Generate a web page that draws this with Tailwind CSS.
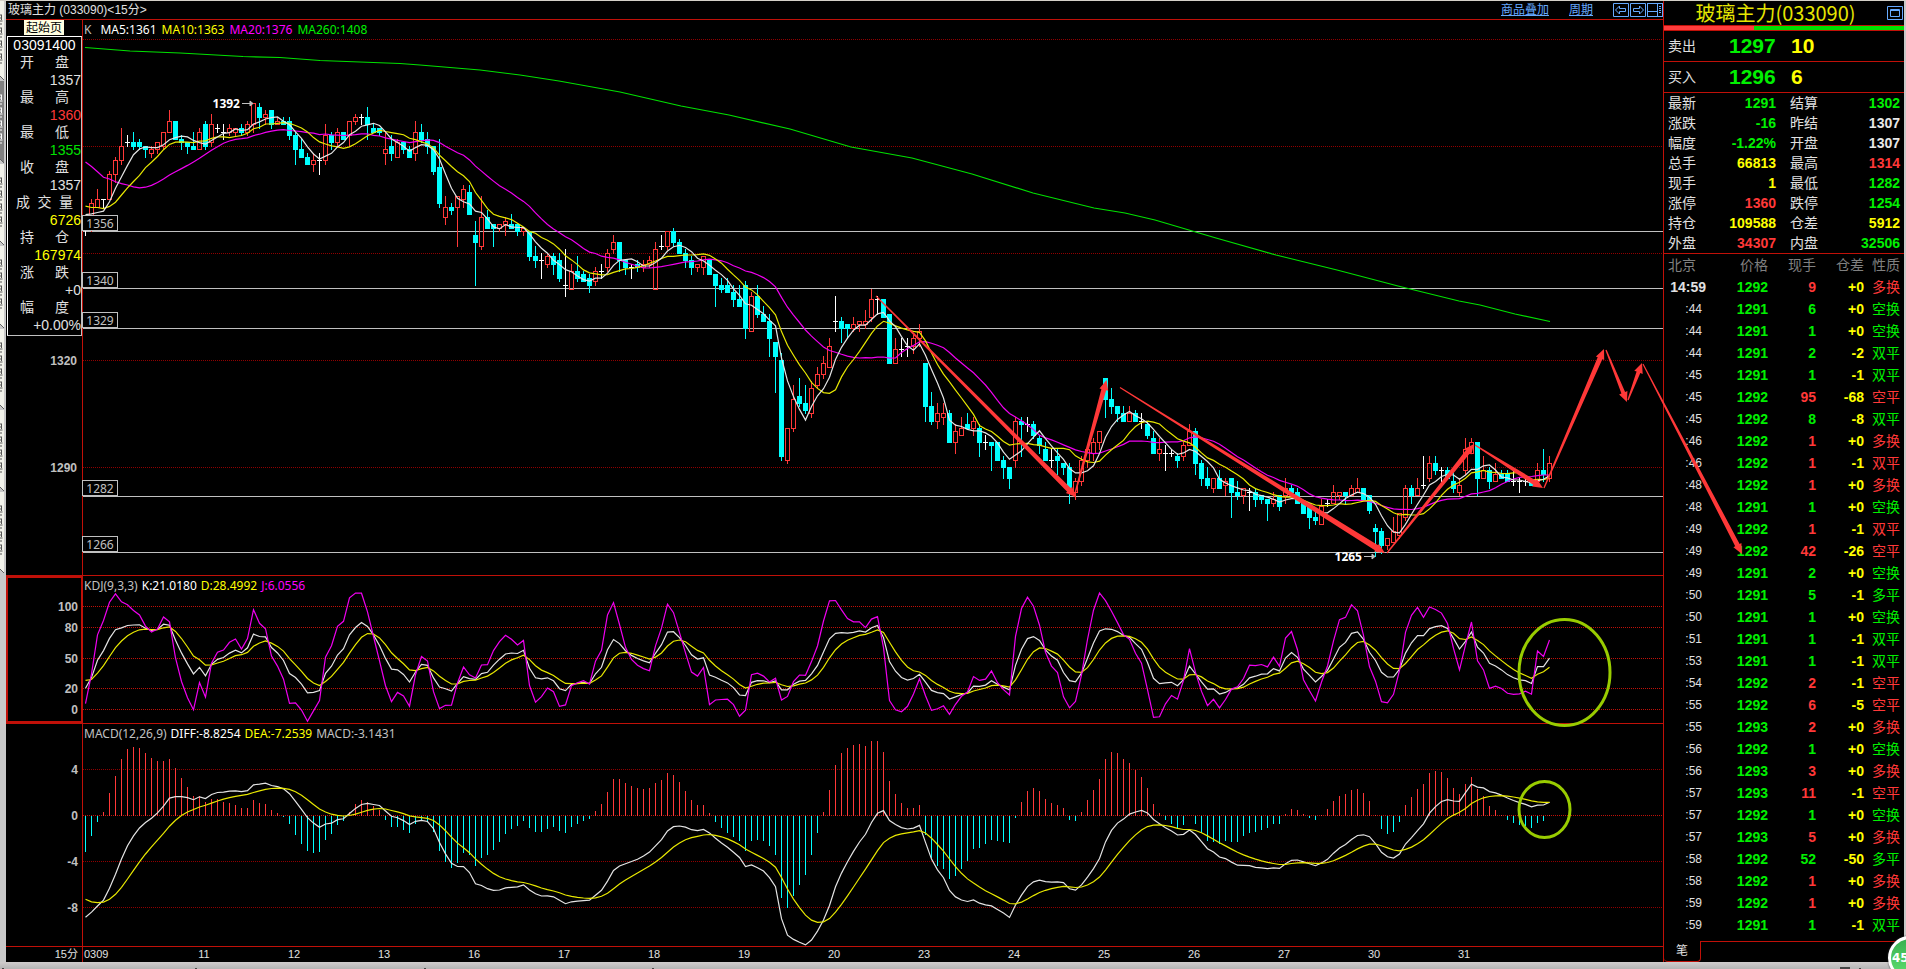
<!DOCTYPE html>
<html lang="zh-CN">
<head>
<meta charset="utf-8">
<meta name="viewport" content="width=device-width, initial-scale=1">
<title>玻璃主力 (033090)</title>
<script src="https://cdn.jsdelivr.net/npm/@tailwindcss/browser@4"></script>
</head>
<body class="relative flex h-screen flex-col overflow-hidden bg-[#d4d0c8] font-['Noto_Sans','Noto_Sans_CJK_SC',sans-serif] text-xs text-[#e0e0e0]">

<div class="flex min-h-0 flex-1 pt-px">
  <!-- side tab strip -->
  <nav class="flex w-[6px] shrink-0 flex-col border-r-2 border-[#c8c8c8] bg-[#c8c8c8]" aria-label="页面标签">
    <svg class="h-full w-full" viewBox="0 1 4 961" preserveAspectRatio="none" id="tabs"></svg>
  </nav>

  <!-- charts -->
  <main class="flex min-w-0 flex-1 flex-col bg-black">
    <header class="flex h-[19px] shrink-0 items-center justify-between border-b border-[#c01008] pl-0.5">
      <h1 class="font-['Liberation_Sans','Noto_Sans_CJK_SC',sans-serif] text-xs leading-[18px]">玻璃主力 (033090)&lt;15分&gt;</h1>
      <div class="flex items-center text-[#66aaff]">
        <a href="#" class="mr-5 leading-4 underline">商品叠加</a>
        <a href="#" class="mr-5 leading-4 underline">周期</a>
        <div class="flex gap-px">
          <button aria-label="左移"><svg width="16" height="14" fill="none" stroke="#66aaff"><path d="M.5.5h15v13H.5zM2.500 7l4-4v2.500h6v3h-6V11z"/></svg></button>
          <button aria-label="右移"><svg width="16" height="14" fill="none" stroke="#66aaff"><path d="M.5.5h15v13H.5zM13.500 7l-4-4v2.500h-6v3h6V11z"/></svg></button>
          <button aria-label="布局"><svg width="16" height="14" fill="none" stroke="#66aaff"><path d="M0 .5h16M0 13.500h16M.5 0v14M15.500 0v14M.5 8.500h10M10.500.5v13"/><path d="M12 3.500h2M12 5.500h2M12 7.500h2M12 9.500h2" /></svg></button>
        </div>
      </div>
    </header>

    <section class="relative min-h-0 flex-[555] border-b border-[#c01008]">
      <svg id="main" class="block h-full w-full" viewBox="6 20 1657 555" preserveAspectRatio="none"></svg>
      <p class="absolute left-[78px] top-0.5 flex gap-[5px] leading-4">
        <span class="mr-1 text-[#c0c0c0]">K</span><span class="text-white">MA5:1361</span><span class="text-[#ffff00]">MA10:1363</span><span class="text-[#ff00ff]">MA20:1376</span><span class="text-[#00f000]">MA260:1408</span>
      </p>
      <a href="#" class="absolute left-[18px] top-0 z-10 h-[15px] bg-[#ffffe1] px-0.5 leading-[15px] text-black">起始页</a>
      <!-- floating candle read-out -->
      <dl id="readout" class="absolute left-px top-4 w-[75px] border border-[#c0c0c0] border-l-white border-t-white bg-black pb-px font-['Liberation_Sans','Noto_Sans_CJK_SC',sans-serif] text-sm leading-[17px]">
        <div class="h-[17px] text-center text-white">03091400</div>
      </dl>
    </section>

    <section class="relative min-h-0 flex-[147] border-b border-[#c01008]">
      <svg id="kdj" class="block h-full w-full" viewBox="6 576 1657 147" preserveAspectRatio="none"></svg>
      <p class="absolute left-[78px] top-0.5 flex gap-1 leading-4"><span class="text-[#c0c0c0]">KDJ(9,3,3)</span><span class="text-white">K:21.0180</span><span class="text-[#ffff00]">D:28.4992</span><span class="text-[#ff00ff]">J:6.0556</span></p>
    </section>

    <section class="relative min-h-0 flex-[222] border-b border-[#c01008]">
      <svg id="macd" class="block h-full w-full" viewBox="6 724 1657 222" preserveAspectRatio="none"></svg>
      <p class="absolute left-[78px] top-0.5 flex gap-1 leading-4"><span class="text-[#c0c0c0]">MACD(12,26,9)</span><span class="text-white">DIFF:-8.8254</span><span class="text-[#ffff00]">DEA:-7.2539</span><span class="text-[#c0c0c0]">MACD:-3.1431</span></p>
    </section>

    <footer class="flex h-[15px] shrink-0 font-['Liberation_Sans','Noto_Sans_CJK_SC',sans-serif] text-[11px] leading-[15px]">
      <span class="w-[76px] shrink-0 pr-1 text-right">15分</span>
      <div id="dates" class="relative flex flex-1 border-l border-[#c01008] pl-[76px]"><span class="absolute left-px">0309</span></div>
    </footer>
  </main>

  <!-- quote panel -->
  <aside class="flex w-[241px] shrink-0 flex-col border-l border-[#c01008] bg-black font-['Liberation_Sans','Noto_Sans_CJK_SC',sans-serif] text-sm">
    <div class="flex h-6 shrink-0 items-center">
      <h2 class="flex-1 text-center font-['Noto_Sans_CJK_SC',sans-serif] text-[20px] leading-6 text-[#e6e600]">玻璃主力(033090)</h2>
      <button aria-label="最大化" class="mr-px"><svg width="16" height="14" fill="none" stroke="#66aaff"><path d="M.5.5h15v13H.5zM3.500 3.500h9v7h-9zM3 4.500h10"/></svg></button>
    </div>
    <div class="flex h-1.5 shrink-0 border-y border-[#c01008]"><i class="h-full flex-[90] bg-[#ff3c3c]"></i><i class="h-full flex-[150] bg-[#00e000]"></i></div>
    <div class="flex h-[31px] shrink-0 items-center border-b border-[#c01008] pl-1"><span class="w-[61px]">卖出</span><b class="w-[62px] text-[21px] text-[#00f000]">1297</b><b class="text-[21px] text-[#ffff00]">10</b></div>
    <div class="flex h-[31px] shrink-0 items-center border-b border-[#c01008] pl-1"><span class="w-[61px]">买入</span><b class="w-[62px] text-[21px] text-[#00f000]">1296</b><b class="text-[21px] text-[#ffff00]">6</b></div>
    <table class="w-full shrink-0 table-fixed border-b border-[#c01008]"><tbody id="quote"></tbody></table>
    <table class="w-full shrink-0 table-fixed">
      <thead><tr class="h-[22px] leading-[22px] text-[#808080]"><th class="w-[42px] pl-1 text-left font-normal">北京</th><th class="w-[62px] text-right font-normal">价格</th><th class="w-12 text-right font-normal">现手</th><th class="w-12 text-right font-normal">仓差</th><th class="pr-1 text-right font-normal">性质</th></tr></thead>
      <tbody id="ticks"></tbody>
    </table>
    <div class="mt-auto flex h-[21px] shrink-0">
      <button class="w-[37px] rounded-b-sm border-b border-r border-[#c01008] text-xs">笔</button>
      <div class="flex-1 border-t border-[#c01008]"></div>
    </div>
  </aside>
  <div class="w-0.5 shrink-0 bg-[#c8c8c8]"></div>
</div>
<div class="h-[7px] shrink-0 bg-linear-to-b from-[#d0cccc] to-[#b4b4b4]">
  <svg class="h-full w-full" viewBox="0 962 1906 7" preserveAspectRatio="none" fill="#444"><path d="M2 968h2v1h-2zM195 968h2v1h-2zM424 968h2v1h-2zM652 968h2v1h-2zM1840 967h10v2h-10zM1859 968h2v1h-2z"/></svg>
</div>

<!-- hand-drawn annotations -->
<svg class="pointer-events-none absolute inset-0 h-full w-full" viewBox="0 0 1906 969" preserveAspectRatio="none">
  <g id="arrows" fill="#ff3838"></g>
  <g fill="none" stroke="#99cc00" stroke-width="3"><ellipse cx="1564.500" cy="672.500" rx="45.500" ry="53"/><ellipse cx="1544.500" cy="809.500" rx="25.500" ry="28"/></g>
</svg>
<button class="absolute -right-[26px] bottom-[-11px] size-11 rounded-full border-3 border-white bg-linear-to-b from-[#38b050] to-[#60e070] pl-px text-left font-['DejaVu_Sans',sans-serif] text-xs font-bold text-white shadow-[0_0_2px_#333]">45</button>

<script>
// 15-minute bars: open, high, low, close
const bars = `1357 1360 1355 1357,1357 1365 1356 1364,1363 1368 1363 1365,1365 1365 1363 1365,1365 1373 1365 1372,1372 1377 1370 1376,1376 1385 1375 1380,1381 1383 1380 1381,1381 1384 1379 1380,1381 1382 1379 1380,
1380 1380 1377 1379,1378 1380 1377 1379,1379 1381 1378 1381,1380 1384 1379 1384,1384 1390 1384 1387,1387 1387 1382 1382,1382 1383 1379 1381,1381 1381 1378 1380,1380 1384 1379 1379,1379 1385 1379 1384,
1386 1387 1379 1380,1381 1389 1380 1386,1385 1386 1384 1385,1384 1386 1382 1384,1384 1386 1383 1385,1384 1385 1383 1385,1385 1386 1383 1384,1384 1387 1383 1386,1386 1392 1384 1392,1391 1392 1385 1388,
1388 1390 1386 1389,1390 1390 1385 1386,1386 1388 1386 1387,1387 1388 1386 1386,1387 1388 1382 1383,1383 1384 1375 1379,1379 1382 1377 1377,1377 1378 1375 1375,1375 1378 1373 1376,1376 1378 1372 1376,
1376 1386 1375 1383,1383 1384 1379 1381,1381 1385 1380 1384,1384 1384 1382 1382,1383 1387 1380 1387,1387 1389 1386 1388,1388 1389 1386 1388,1388 1391 1382 1386,1385 1386 1384 1384,1385 1385 1383 1384,
1378 1384 1375 1379,1380 1383 1376 1378,1377 1382 1377 1381,1381 1381 1378 1379,1379 1380 1377 1377,1378 1387 1376 1384,1384 1386 1381 1382,1382 1384 1378 1380,1380 1380 1372 1373,1374 1382 1363 1364,
1360 1366 1358 1363,1363 1364 1361 1362,1363 1366 1352 1366,1365 1369 1363 1368,1367 1369 1361 1361,1355 1359 1341 1353,1352 1366 1351 1360,1360 1362 1357 1357,1358 1358 1352 1357,1357 1358 1356 1358,
1358 1360 1355 1359,1358 1361 1357 1357,1358 1358 1355 1356,1356 1357 1355 1357,1356 1356 1348 1349,1349 1352 1346 1348,1348 1350 1343 1348,1347 1350 1346 1349,1349 1350 1344 1347,1348 1350 1342 1343,
1341 1351 1338 1341,1340 1347 1340 1345,1345 1349 1342 1343,1344 1345 1342 1342,1343 1344 1339 1341,1342 1346 1341 1345,1345 1347 1343 1345,1346 1351 1345 1350,1351 1355 1350 1353,1353 1353 1345 1348,
1348 1348 1344 1346,1346 1347 1343 1346,1347 1348 1345 1346,1346 1348 1345 1347,1347 1349 1346 1348,1340 1353 1340 1351,1352 1355 1351 1352,1352 1356 1351 1356,1356 1357 1352 1353,1353 1354 1350 1350,
1350 1351 1346 1348,1348 1349 1344 1346,1346 1347 1345 1347,1346 1349 1344 1349,1348 1348 1344 1344,1344 1344 1335 1341,1341 1343 1339 1340,1341 1343 1339 1339,1339 1341 1335 1337,1337 1341 1335 1335,
1341 1342 1326 1329,1328 1339 1328 1338,1338 1341 1332 1333,1333 1335 1331 1331,1331 1333 1321 1326,1325 1325 1311 1321,1320 1322 1292 1293,1292 1301 1291 1301,1301 1313 1300 1309,1310 1315 1307 1308,
1308 1313 1305 1306,1305 1314 1304 1312,1313 1318 1312 1316,1316 1321 1315 1319,1318 1326 1318 1324,1331 1338 1328 1331,1331 1332 1325 1329,1330 1330 1326 1329,1329 1332 1328 1330,1330 1331 1328 1331,
1330 1334 1329 1331,1332 1340 1331 1337,1337 1338 1333 1337,1337 1337 1332 1332,1333 1333 1319 1319,1319 1326 1319 1323,1323 1326 1321 1323,1324 1326 1321 1324,1324 1327 1322 1326,1326 1330 1324 1328,
1319 1319 1303 1307,1307 1311 1302 1303,1303 1308 1301 1305,1304 1308 1302 1305,1305 1306 1297 1297,1297 1302 1294 1300,1299 1304 1299 1301,1302 1305 1301 1301,1301 1304 1299 1303,1301 1302 1293 1297,
1297 1299 1295 1297,1297 1297 1289 1296,1297 1297 1292 1292,1292 1293 1287 1290,1290 1290 1284 1287,1292 1304 1290 1303,1303 1304 1293 1302,1302 1304 1300 1302,1302 1303 1298 1299,1298 1299 1294 1296,
1295 1297 1292 1292,1292 1295 1290 1292,1293 1295 1288 1292,1291 1291 1288 1290,1290 1291 1280 1283,1283 1287 1281 1286,1286 1293 1285 1292,1292 1296 1290 1295,1294 1298 1292 1297,1297 1300 1295 1300,
1315 1315 1304 1309,1309 1312 1305 1307,1307 1307 1303 1305,1305 1307 1303 1303,1303 1307 1303 1305,1305 1306 1303 1303,1303 1305 1301 1303,1302 1303 1298 1299,1298 1300 1294 1294,1294 1298 1292 1295,
1294 1296 1289 1294,1294 1295 1293 1294,1293 1294 1290 1292,1293 1297 1292 1296,1296 1302 1296 1300,1300 1301 1288 1291,1291 1292 1285 1287,1287 1290 1284 1285,1284 1287 1283 1287,1287 1289 1284 1284,
1285 1287 1282 1286,1287 1287 1276 1283,1283 1286 1281 1282,1282 1284 1280 1284,1283 1284 1278 1283,1283 1284 1279 1281,1282 1282 1280 1281,1281 1281 1275 1280,1280 1283 1279 1281,1282 1282 1278 1279,
1282 1287 1280 1284,1284 1285 1282 1283,1283 1284 1280 1280,1280 1280 1277 1277,1279 1279 1273 1276,1276 1278 1274 1275,1274 1281 1274 1279,1280 1281 1279 1280,1280 1285 1280 1283,1282 1283 1281 1283,
1283 1283 1280 1282,1282 1285 1282 1284,1283 1287 1283 1284,1284 1284 1281 1281,1282 1282 1277 1278,1273 1274 1265 1272,1272 1273 1266 1268,1268 1270 1267 1270,1269 1276 1269 1272,1271 1277 1270 1277,
1276 1285 1275 1284,1284 1285 1280 1282,1282 1287 1282 1284,1285 1293 1284 1285,1287 1293 1286 1291,1291 1293 1288 1289,1289 1290 1286 1289,1289 1290 1287 1287,1286 1289 1283 1284,1283 1287 1282 1285,
1289 1298 1288 1295,1294 1298 1294 1297,1297 1297 1282 1287,1287 1293 1287 1289,1289 1290 1284 1286,1286 1291 1286 1288,1288 1289 1287 1287,1288 1289 1286 1286,1286 1289 1285 1286,1286 1287 1283 1286,
1286 1287 1285 1286,1286 1287 1285 1285,1286 1291 1285 1289,1289 1295 1286 1288,1287 1293 1286 1291`.split(',').map(s => s.trim().split(' ').map(Number));

const X = i => 85 + 6 * i;
const py = p => Math.floor(467.4 - (p - 1290) * 3.567);
const text = (x, y, s, cls, anchor) => `<text x="${x}" y="${y}" class="${cls}" text-anchor="${anchor || 'end'}">${s}</text>`;
const curve = (v, y, color) => `<polyline points="${v.map((p, i) => (X(i) + .5) + ',' + y(p).toFixed(1)).join(' ')}" fill="none" stroke="${color}" stroke-width="1.2"/>`;
const dots = (y, c) => `<path d="M83 ${y + .5}H1663" stroke="${c}" stroke-dasharray="1 1" shape-rendering="crispEdges"/>`;
const axis = "fill-[#c0c0c0] font-['Liberation_Sans',sans-serif] text-xs font-bold";

// main pane
let m = '';
for (const y of [39, 146, 253, 360, 467]) m += dots(y, '#900000');
m += '<g shape-rendering="crispEdges">';
for (const y of [231, 288, 328, 496, 552]) m += `<path d="M82 ${y + .5}H1663" stroke="#c0c0c0"/>`;
m += '<path d="M82.500 20V575" stroke="#c01008"/>';
bars.forEach(([o, h, l, c], i) => {
  const x = X(i), col = c > o ? '#ff3838' : c < o ? '#00ffff' : '#ffffff', a = py(Math.max(o, c)), b = py(Math.min(o, c));
  if (c > o) m += `<path d="M${x + .5} ${py(h)}V${a}M${x + .5} ${b}V${py(l) + 1}M${x - 1.5} ${a + .5}h4v${b - a}h-4z" stroke="${col}" fill="none"/>`;
  else m += `<path d="M${x + .5} ${py(h)}V${py(l) + 1}" stroke="${col}"/><rect x="${x - 2}" y="${a}" width="5" height="${b - a + 1}" fill="${col}"/>`;
});
m += '</g>';
const close = bars.map(b => b[3]);
const ma = (n, head) => close.map((_, i) => i < n - 1 ? head[i] : close.slice(i - n + 1, i + 1).reduce((a, b) => a + b) / n);
const my = p => 467.9 - (p - 1290) * 3.567;
m += curve(ma(20, [1375.8, 1374.5, 1373, 1371.5, 1371, 1370.2, 1369.7, 1369.3, 1368.8, 1368.5, 1368.7, 1369.2, 1370, 1371, 1372.1, 1373, 1373.9, 1374.8, 1375.8]), my, '#f000f0');
m += curve(ma(10, [1363.4, 1363, 1363, 1362.7, 1363.3, 1364.5, 1366.5, 1368.5, 1370.3]), my, '#e8e800');
m += curve(ma(5, [1361, 1361.2, 1361.6, 1362]), my, '#e4e4e4');
m += '<polyline fill="none" stroke="#00e000" stroke-width="1.2" points="85,47.500 130,51 180,53 243,56.500 280,57.500 320,60.500 400,63.500 420,65 480,70 520,75 559,81 620,92 681,106 729,115 790,129 851,147 912,158 972,174 1033,193 1094,208 1125,213 1155,220 1216,238 1276,255 1337,270 1398,286 1459,301 1480,305 1515,314 1550,321.500"/>';
for (const [p, y] of [[1356, 215], [1340, 272], [1329, 312], [1282, 480], [1266, 536]])
  m += `<rect x="82.500" y="${y + .5}" width="35" height="15" fill="#000" stroke="#c0c0c0"/>` + text(100, y + 12.5, p, 'fill-[#c0c0c0] text-xs', 'middle');
m += text(77, 365, 1320, axis) + text(77, 472, 1290, axis);
m += text(240, 108, 1392, 'fill-white text-xs font-bold') + text(1362, 561, 1265, 'fill-white text-xs font-bold');
m += '<path d="M242 103.500h8M250 101l3 2.500l-3 2.500zM1364 556.500h8M1372 554l3 2.500l-3 2.500z" stroke="#c0c0c0" fill="#c0c0c0"/>';
document.getElementById('main').innerHTML = m;

// KDJ pane
const ky = v => 709.8 - v * 1.03;
let k = '';
for (const [v, y] of [[100, 606], [80, 627], [50, 658], [20, 688], [0, 709]]) k += dots(y, '#c01008') + text(78, y + 5, v, axis);
k += '<path d="M7 577H82V722H7z" fill="none" stroke="#c01008" stroke-width="2" shape-rendering="crispEdges"/>';
const J = [6.06, 35, 72.8, 86.7, 104.5, 112.6, 104.9, 102], K = [21.018], D = [28.4992];
for (let i = 1; i < bars.length; i++) {
  if (i < 8) { D[i] = (6 * D[i - 1] + J[i]) / 7; K[i] = (J[i] + 2 * D[i]) / 3; continue; }
  const w = bars.slice(i - 8, i + 1), hi = Math.max(...w.map(b => b[1])), lo = Math.min(...w.map(b => b[2]));
  K[i] = K[i - 1] * 2 / 3 + (close[i] - lo) / (hi - lo) * 100 / 3;
  D[i] = D[i - 1] * 2 / 3 + K[i] / 3;
  J[i] = 3 * K[i] - 2 * D[i];
}
k += curve(K, ky, '#e4e4e4') + curve(D, ky, '#e8e800') + curve(J, ky, '#f000f0');
document.getElementById('kdj').innerHTML = k;

// MACD pane
const dy = v => 815.8 - v * 11.5;
let d = '';
for (const [v, y, c] of [[4, 769, '#900000'], [0, 815, '#c01008'], [-4, 861, '#900000'], [-8, 907, '#900000']]) d += dots(y, c) + text(78, y + 5, v, axis);
d += '<path d="M82.500 724V946" stroke="#c01008" shape-rendering="crispEdges"/>';
let e12 = 1366.47, e26 = 1375.3;
const diff = [-8.8254], dea = [-7.2539];
for (let i = 1; i < bars.length; i++) {
  e12 = (e12 * 11 + close[i] * 2) / 13; e26 = (e26 * 25 + close[i] * 2) / 27;
  diff[i] = e12 - e26; dea[i] = dea[i - 1] * .8 + diff[i] * .2;
}
diff.forEach((v, i) => {
  const h = 2 * (v - dea[i]);
  d += `<path d="M${X(i) + .5} 815.500V${Math.round(dy(h))}" stroke="${h > 0 ? '#ff3838' : '#00ffff'}" shape-rendering="crispEdges"/>`;
});
d += curve(diff, dy, '#e4e4e4') + curve(dea, dy, '#e8e800');
document.getElementById('macd').innerHTML = d;

document.getElementById('dates').insertAdjacentHTML('beforeend', [11, 12, 13, 16, 17, 18, 19, 20, 23, 24, 25, 26, 27, 30, 31].map(n => `<span class="w-[90px] text-center">${n}</span>`).join(''));

document.getElementById('readout').insertAdjacentHTML('beforeend', [['开盘', '1357', 'text-[#e0e0e0]'], ['最高', '1360', 'text-[#ff3838]'], ['最低', '1355', 'text-[#00e000]'], ['收盘', '1357', 'text-[#e0e0e0]'], ['成交量', '6726', 'text-[#ffff00]'], ['持仓', '167974', 'text-[#ffff00]'], ['涨跌', '+0', 'text-[#e0e0e0]'], ['幅度', '+0.00%', 'text-[#e0e0e0]']].map(([a, b, c]) =>
  `<div class="grid h-[35px] grid-rows-2"><dt class="flex justify-between ${a.length > 2 ? 'px-2' : 'px-3'}">${[...a].map(s => `<span>${s}</span>`).join('')}</dt><dd class="text-right ${c}">${b}</dd></div>`).join(''));

const tone = { g: 'text-[#00f000]', r: 'text-[#ff3838]', y: 'text-[#ffff00]', w: 'text-[#e8e8e8]' };
document.getElementById('quote').innerHTML = [['最新', '1291', 'g', '结算', '1302', 'g'], ['涨跌', '-16', 'g', '昨结', '1307', 'w'], ['幅度', '-1.22%', 'g', '开盘', '1307', 'w'], ['总手', '66813', 'y', '最高', '1314', 'r'], ['现手', '1', 'y', '最低', '1282', 'g'], ['涨停', '1360', 'r', '跌停', '1254', 'g'], ['持仓', '109588', 'y', '仓差', '5912', 'y'], ['外盘', '34307', 'r', '内盘', '32506', 'g']].map(r =>
  `<tr class="h-5 leading-5"><th class="w-9 pl-1 text-left font-normal">${r[0]}</th><td class="w-[76px] text-right font-bold ${tone[r[2]]}">${r[1]}</td><th class="w-[50px] pl-3.5 text-left font-normal">${r[3]}</th><td class="pr-1 text-right font-bold ${tone[r[5]]}">${r[4]}</td></tr>`).join('');

const ticks = `14:59 1292 9 r +0 多换 r|:44 1291 6 g +0 空换 g|:44 1291 1 g +0 空换 g|:44 1291 2 g -2 双平 g|:45 1291 1 g -1 双平 g|:45 1292 95 r -68 空平 r|:45 1292 8 g -8 双平 g|:46 1292 1 r +0 多换 r|:46 1292 1 r -1 双平 r|:48 1292 1 r +0 多换 r|:48 1291 1 g +0 空换 g|:49 1292 1 r -1 双平 r|:49 1292 42 r -26 空平 r|:49 1291 2 g +0 空换 g|:50 1291 5 g -1 多平 g|:50 1291 1 g +0 空换 g|:51 1291 1 g -1 双平 g|:53 1291 1 g -1 双平 g|:54 1292 2 r -1 空平 r|:55 1292 6 r -5 空平 r|:55 1293 2 r +0 多换 r|:56 1292 1 g +0 空换 g|:56 1293 3 r +0 多换 r|:57 1293 11 r -1 空平 r|:57 1292 1 g +0 空换 g|:57 1293 5 r +0 多换 r|:58 1292 52 g -50 多平 g|:58 1292 1 r +0 多换 r|:59 1292 1 r +0 多换 r|:59 1291 1 g -1 双平 g`;
document.getElementById('ticks').innerHTML = ticks.split('|').map((s, i) => {
  const [t, p, n, nc, c, q, qc] = s.split(' ');
  return `<tr class="h-[22px] leading-[22px]"><td class="text-right ${i ? 'pr-1 text-xs' : 'font-bold'}">${t}</td><td class="text-right font-bold text-[#00f000]">${p}</td><td class="text-right font-bold ${tone[nc]}">${n}</td><td class="text-right font-bold text-[#ffff00]">${c}</td><td class="pr-1 text-right ${tone[qc]}">${q}</td></tr>`;
}).join('');

// tapered arrows: x1, y1, x2, y2, end width
document.getElementById('arrows').innerHTML = [[876, 296, 1076, 497, 5], [1074, 497, 1106.5, 380, 5], [1120, 387.5, 1385, 553, 6], [1387, 553, 1474, 444, 5], [1475, 445, 1543, 488, 5], [1544, 488, 1604, 349, 5], [1606, 350, 1627, 402, 4], [1628, 400, 1642, 363, 4], [1643, 364, 1742, 554, 5]].map(([a, b, c, e, w]) => {
  const L = Math.hypot(c - a, e - b), ux = (c - a) / L, uy = (e - b) / L, hx = c - ux * 10, hy = e - uy * 10;
  const at = (x, y, o) => `${(x - uy * o).toFixed(1)},${(y + ux * o).toFixed(1)}`;
  return `<polygon points="${at(a, b, .6)} ${at(hx, hy, w / 2)} ${at(hx, hy, 4.5)} ${c},${e} ${at(hx, hy, -4.5)} ${at(hx, hy, -w / 2)} ${at(a, b, -.6)}"/>`;
}).join('');

// side tabs
let t = '';
[[1, 80], [81, 163], [164, 245], [246, 328], [329, 409], [410, 491], [492, 573]].forEach(([a, b], i) => {
  t += `<path d="M0 ${a}H4V${b}L0 ${b - 4}z" fill="${i === 1 ? '#808080' : '#f2f2ea'}"/><path d="M0 ${b - 4}L4 ${b}" stroke="#606060"/>`;
  for (let y = a + 14; y < b - 22; y += 13) t += `<path d="M0 ${y}h2M0 ${y + 3}h1.500M0 ${y + 6}h2.500M1.500 ${y}v5M0 ${y + 9}h2" stroke="${i === 1 ? '#fff' : '#555'}" fill="none"/>`;
});
document.getElementById('tabs').innerHTML = t;
</script>
</body>
</html>
